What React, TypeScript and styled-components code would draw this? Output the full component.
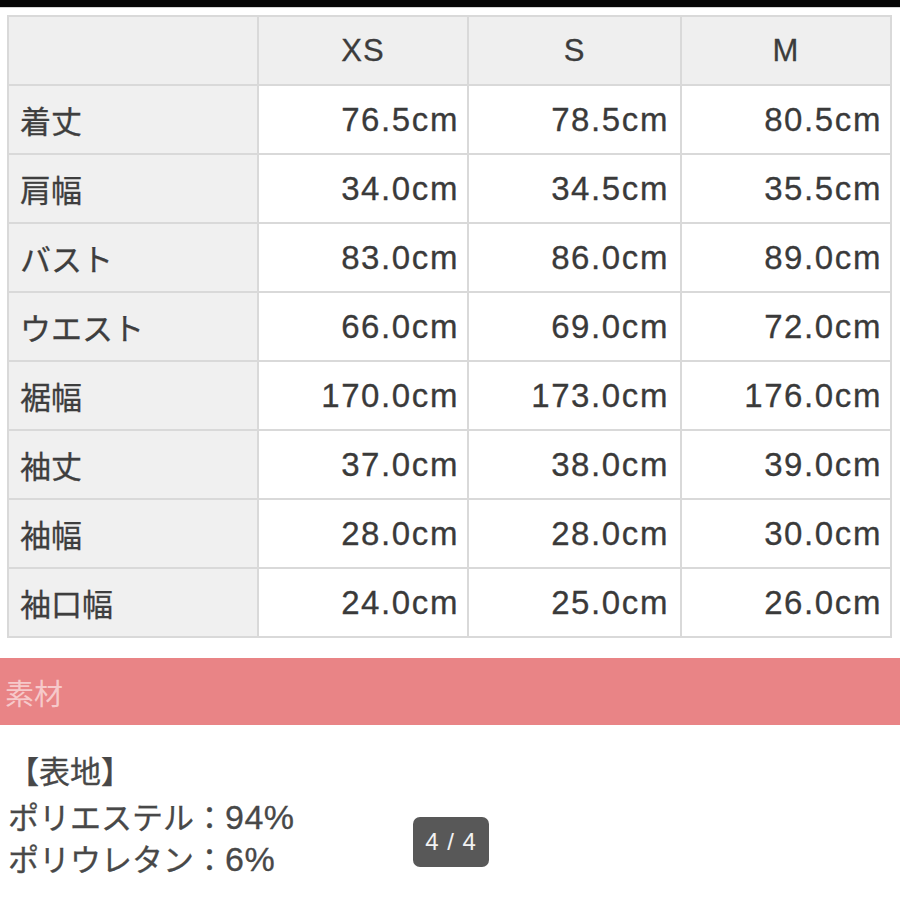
import React from "react";
import styled, { createGlobalStyle } from "styled-components";

const Global = createGlobalStyle`
  html, body { margin: 0; padding: 0; background: #ffffff; }
  body {
    width: 900px;
    height: 900px;
    overflow: hidden;
    font-family: "Liberation Sans", "Noto Sans CJK JP", sans-serif;
    color: #3c3c3c;
  }
`;

const Page = styled.div`
  position: relative;
  width: 900px;
  height: 900px;
  background: #ffffff;
  display: flex;
  flex-direction: column;
`;

const TopBar = styled.div`
  height: 7px;
  background: #050505;
  border-bottom: 1px solid #d4d4d4;
`;

const TableWrap = styled.div`
  padding: 7px 10px 0 7px;
`;

const SizeTable = styled.table`
  border-collapse: collapse;
  table-layout: fixed;
  width: 883px;
  border: 2px solid #d8d8d8;
`;

const HeadCell = styled.th`
  height: 67px;
  padding: 0;
  background: #efefef;
  border: 2px solid #d9d9d9;
  font-family: "Liberation Sans", sans-serif;
  font-weight: 400;
  font-size: 31px;
  letter-spacing: 1px;
  color: #3c3c3c;
  -webkit-text-stroke: 0.3px #3c3c3c;
  text-align: center;
  vertical-align: middle;
`;

const LabelCell = styled.td`
  height: 67px;
  padding: 0 0 0 11px;
  background: #f0f0f0;
  border: 2px solid #d9d9d9;
  font-family: "Noto Sans CJK JP", sans-serif;
  font-size: 31px;
  color: #3e3e3e;
  -webkit-text-stroke: 0.3px #3e3e3e;
  text-align: left;
  vertical-align: middle;
  white-space: nowrap;
`;

const ValueCell = styled.td<{ $pad: number }>`
  height: 67px;
  padding: 0 ${(p) => p.$pad}px 0 0;
  background: #ffffff;
  border: 2px solid #d9d9d9;
  font-family: "Liberation Sans", sans-serif;
  font-size: 33px;
  letter-spacing: 1.6px;
  color: #3a3a3a;
  -webkit-text-stroke: 0.3px #3a3a3a;
  text-align: right;
  vertical-align: middle;
  white-space: nowrap;
`;

const SectionBand = styled.div`
  margin-top: 20px;
  height: 67px;
  background: #e98486;
  display: flex;
  align-items: center;
  padding-left: 5px;
  font-family: "Noto Sans CJK JP", sans-serif;
  font-size: 29px;
  color: #f6c9ca;
`;

const Material = styled.div`
  padding: 26px 0 0 8px;
  display: flex;
  flex-direction: column;
  font-family: "Liberation Sans", "Noto Sans CJK JP", sans-serif;
  font-size: 31px;
  color: #484848;
  -webkit-text-stroke: 0.3px #484848;
`;

const MaterialLine = styled.div<{ $h: number }>`
  height: ${(p) => p.$h}px;
  line-height: ${(p) => p.$h}px;
  white-space: nowrap;
`;

const Percent = styled.span`
  font-size: 34px;
  letter-spacing: 0.5px;
`;

const PageBadge = styled.div`
  position: absolute;
  left: 413px;
  top: 817px;
  width: 76px;
  height: 50px;
  border-radius: 7px;
  background: #585858;
  color: #f2f2f2;
  display: flex;
  align-items: center;
  justify-content: center;
  font-family: "Liberation Sans", sans-serif;
  font-size: 24px;
  letter-spacing: 1px;
`;

const sizes = ["XS", "S", "M"];
const rows: [string, string, string, string][] = [
  ["着丈", "76.5cm", "78.5cm", "80.5cm"],
  ["肩幅", "34.0cm", "34.5cm", "35.5cm"],
  ["バスト", "83.0cm", "86.0cm", "89.0cm"],
  ["ウエスト", "66.0cm", "69.0cm", "72.0cm"],
  ["裾幅", "170.0cm", "173.0cm", "176.0cm"],
  ["袖丈", "37.0cm", "38.0cm", "39.0cm"],
  ["袖幅", "28.0cm", "28.0cm", "30.0cm"],
  ["袖口幅", "24.0cm", "25.0cm", "26.0cm"],
];
const pads = [8, 11, 8];

export default function App() {
  return (
    <>
      <Global />
      <Page>
        <TopBar />
        <TableWrap>
          <SizeTable>
            <colgroup>
              <col style={{ width: 250 }} />
              <col style={{ width: 210 }} />
              <col style={{ width: 213 }} />
              <col style={{ width: 210 }} />
            </colgroup>
            <thead>
              <tr>
                <HeadCell />
                {sizes.map((s) => (
                  <HeadCell key={s}>{s}</HeadCell>
                ))}
              </tr>
            </thead>
            <tbody>
              {rows.map((r) => (
                <tr key={r[0]}>
                  <LabelCell>{r[0]}</LabelCell>
                  {r.slice(1).map((v, i) => (
                    <ValueCell key={i} $pad={pads[i]}>
                      {v}
                    </ValueCell>
                  ))}
                </tr>
              ))}
            </tbody>
          </SizeTable>
        </TableWrap>
        <SectionBand>素材</SectionBand>
        <Material>
          <MaterialLine $h={44}>【表地】</MaterialLine>
          <MaterialLine $h={44}>
            ポリエステル：<Percent>94%</Percent>
          </MaterialLine>
          <MaterialLine $h={40}>
            ポリウレタン：<Percent>6%</Percent>
          </MaterialLine>
        </Material>
        <PageBadge>4 / 4</PageBadge>
      </Page>
    </>
  );
}
